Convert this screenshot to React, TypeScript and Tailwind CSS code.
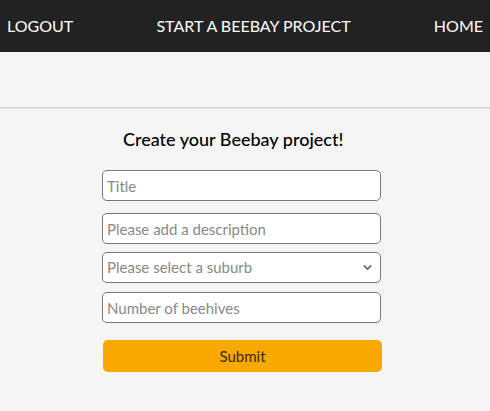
import { ChevronDown } from 'lucide-react';

export default function App() {
  return (
    <div className="min-h-[411px] bg-[#f5f5f5] font-['Lato','Noto_Sans',sans-serif]">
      <nav className="flex h-[52px] items-center justify-between bg-[#222222] px-[7px] text-[16px] text-white">
        <a href="#">LOGOUT</a>
        <a href="#">START A BEEBAY PROJECT</a>
        <a href="#">HOME</a>
      </nav>
      <div className="h-[55px]" />
      <div className="h-[3px] border-t border-[#cfcfcf] bg-gradient-to-b from-[#e2e2e2] to-[#f5f5f5]" />

      <form className="ml-[102px] flex w-[280px] flex-col pt-[16px]" onSubmit={(e) => e.preventDefault()}>
        <h2 className="mb-[17px] pl-[21px] text-left text-[18px] font-medium text-black">Create your Beebay project!</h2>
        <input
          type="text"
          placeholder="Title"
          className="h-[31px] w-[279px] rounded-[5px] border border-[#777] bg-white px-[4px] text-[15px] text-black placeholder-[#888] outline-none"
        />
        <input
          type="text"
          placeholder="Please add a description"
          className="mt-[12px] h-[31px] w-[279px] rounded-[5px] border border-[#777] bg-white px-[4px] text-[15px] text-black placeholder-[#888] outline-none"
        />
        <div className="relative mt-[8px] w-[279px]">
          <select
            defaultValue=""
            className="h-[31px] w-full appearance-none rounded-[5px] border border-[#777] bg-white px-[4px] text-[15px] text-[#888] outline-none"
          >
            <option value="" disabled>Please select a suburb</option>
          </select>
          <ChevronDown size={13} strokeWidth={3} className="pointer-events-none absolute right-[7px] top-[9px] text-[#666]" />
        </div>
        <input
          type="text"
          placeholder="Number of beehives"
          className="mt-[9px] h-[31px] w-[279px] rounded-[5px] border border-[#777] bg-white px-[4px] text-[15px] text-black placeholder-[#888] outline-none"
        />
        <button
          type="submit"
          className="ml-[1px] mt-[17px] h-[32px] w-[279px] rounded-[5px] bg-[#f7a900] text-[15px] text-[#3a2a00]"
        >
          Submit
        </button>
      </form>
    </div>
  );
}
